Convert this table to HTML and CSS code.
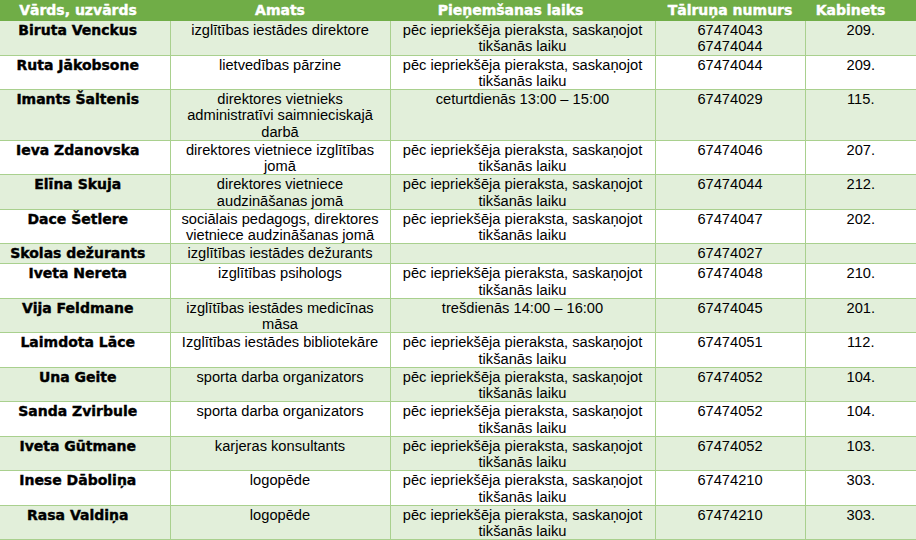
FILE: index.html
```html
<!DOCTYPE html>
<html lang="lv">
<head>
<meta charset="utf-8">
<title>Kontakti</title>
<link rel="stylesheet" href="styles.css">
</head>
<body>
<table class="staff">
  <colgroup>
    <col class="c-name"><col class="c-role"><col class="c-time"><col class="c-phone"><col class="c-room">
  </colgroup>
  <thead>
    <tr>
      <th class="h-name">Vārds, uzvārds</th>
      <th>Amats</th>
      <th class="h-time">Pieņemšanas laiks</th>
      <th>Tālruņa numurs</th>
      <th class="h-room">Kabinets</th>
    </tr>
  </thead>
  <tbody>
    <tr><td class="name">Biruta Venckus</td><td>izglītības iestādes direktore</td><td>pēc iepriekšēja pieraksta, saskaņojot<br>tikšanās laiku</td><td>67474043<br>67474044</td><td>209.</td></tr>
    <tr><td class="name">Ruta Jākobsone</td><td>lietvedības pārzine</td><td>pēc iepriekšēja pieraksta, saskaņojot<br>tikšanās laiku</td><td>67474044</td><td>209.</td></tr>
    <tr><td class="name">Imants Šaltenis</td><td>direktores vietnieks<br>administratīvi saimnieciskajā<br>darbā</td><td>ceturtdienās 13:00 – 15:00</td><td>67474029</td><td>115.</td></tr>
    <tr><td class="name">Ieva Zdanovska</td><td>direktores vietniece izglītības<br>jomā</td><td>pēc iepriekšēja pieraksta, saskaņojot<br>tikšanās laiku</td><td>67474046</td><td>207.</td></tr>
    <tr><td class="name">Elīna Skuja</td><td>direktores vietniece<br>audzināšanas jomā</td><td>pēc iepriekšēja pieraksta, saskaņojot<br>tikšanās laiku</td><td>67474044</td><td>212.</td></tr>
    <tr><td class="name">Dace Šetlere</td><td>sociālais pedagogs, direktores<br>vietniece audzināšanas jomā</td><td>pēc iepriekšēja pieraksta, saskaņojot<br>tikšanās laiku</td><td>67474047</td><td>202.</td></tr>
    <tr><td class="name">Skolas dežurants</td><td>izglītības iestādes dežurants</td><td></td><td>67474027</td><td></td></tr>
    <tr><td class="name">Iveta Nereta</td><td>izglītības psihologs</td><td>pēc iepriekšēja pieraksta, saskaņojot<br>tikšanās laiku</td><td>67474048</td><td>210.</td></tr>
    <tr><td class="name">Vija Feldmane</td><td>izglītības iestādes medicīnas<br>māsa</td><td>trešdienās 14:00 – 16:00</td><td>67474045</td><td>201.</td></tr>
    <tr><td class="name">Laimdota Lāce</td><td>Izglītības iestādes bibliotekāre</td><td>pēc iepriekšēja pieraksta, saskaņojot<br>tikšanās laiku</td><td>67474051</td><td>112.</td></tr>
    <tr><td class="name">Una Geite</td><td>sporta darba organizators</td><td>pēc iepriekšēja pieraksta, saskaņojot<br>tikšanās laiku</td><td>67474052</td><td>104.</td></tr>
    <tr><td class="name">Sanda Zvirbule</td><td>sporta darba organizators</td><td>pēc iepriekšēja pieraksta, saskaņojot<br>tikšanās laiku</td><td>67474052</td><td>104.</td></tr>
    <tr><td class="name">Iveta Gūtmane</td><td>karjeras konsultants</td><td>pēc iepriekšēja pieraksta, saskaņojot<br>tikšanās laiku</td><td>67474052</td><td>103.</td></tr>
    <tr><td class="name">Inese Dāboliņa</td><td>logopēde</td><td>pēc iepriekšēja pieraksta, saskaņojot<br>tikšanās laiku</td><td>67474210</td><td>303.</td></tr>
    <tr><td class="name">Rasa Valdiņa</td><td>logopēde</td><td>pēc iepriekšēja pieraksta, saskaņojot<br>tikšanās laiku</td><td>67474210</td><td>303.</td></tr>
  </tbody>
</table>
</body>
</html>
```
FILE: styles.css
```css
html, body {
  margin: 0;
  padding: 0;
  background: #ffffff;
}

.staff {
  width: 916px;
  border-collapse: collapse;
  table-layout: fixed;
  font-family: "Liberation Sans", Arial, sans-serif;
  font-size: 14.67px;
  color: #000000;
}

.c-name { width: 170px; }
.c-role { width: 220px; }
.c-time { width: 265px; }
.c-phone { width: 150px; }
.c-room { width: 111px; }

.staff th {
  background: #70ad47;
  color: #ffffff;
  font-family: "DejaVu Sans", sans-serif;
  font-weight: bold;
  font-size: 14px;
  -webkit-text-stroke: 0.4px #ffffff;
  line-height: 19px;
  padding: 1px 0 1px 0;
  text-align: center;
  white-space: nowrap;
  border: none;
}

.staff th.h-name { padding-right: 14px; }
.staff th.h-time { padding-right: 24px; }
.staff th.h-room { padding-right: 20px; }

.staff td {
  vertical-align: top;
  text-align: center;
  line-height: 16.25px;
  padding: 1px 0 0 0;
  white-space: nowrap;
  border: 1px solid #a9d08e;
}

.staff tr td:first-child { border-left: none; }
.staff tr td:last-child { border-right: none; }
.staff tbody tr:first-child td { border-top: none; }

.staff tbody tr:nth-child(odd) td { background: #e2efda; }
.staff tbody tr:nth-child(even) td { background: #ffffff; }

.staff td.name {
  font-family: "DejaVu Sans", sans-serif;
  font-weight: bold;
  font-size: 14px;
  -webkit-text-stroke: 0.4px #000000;
  line-height: 19px;
  padding: 0 14px 0 0;
}
```
